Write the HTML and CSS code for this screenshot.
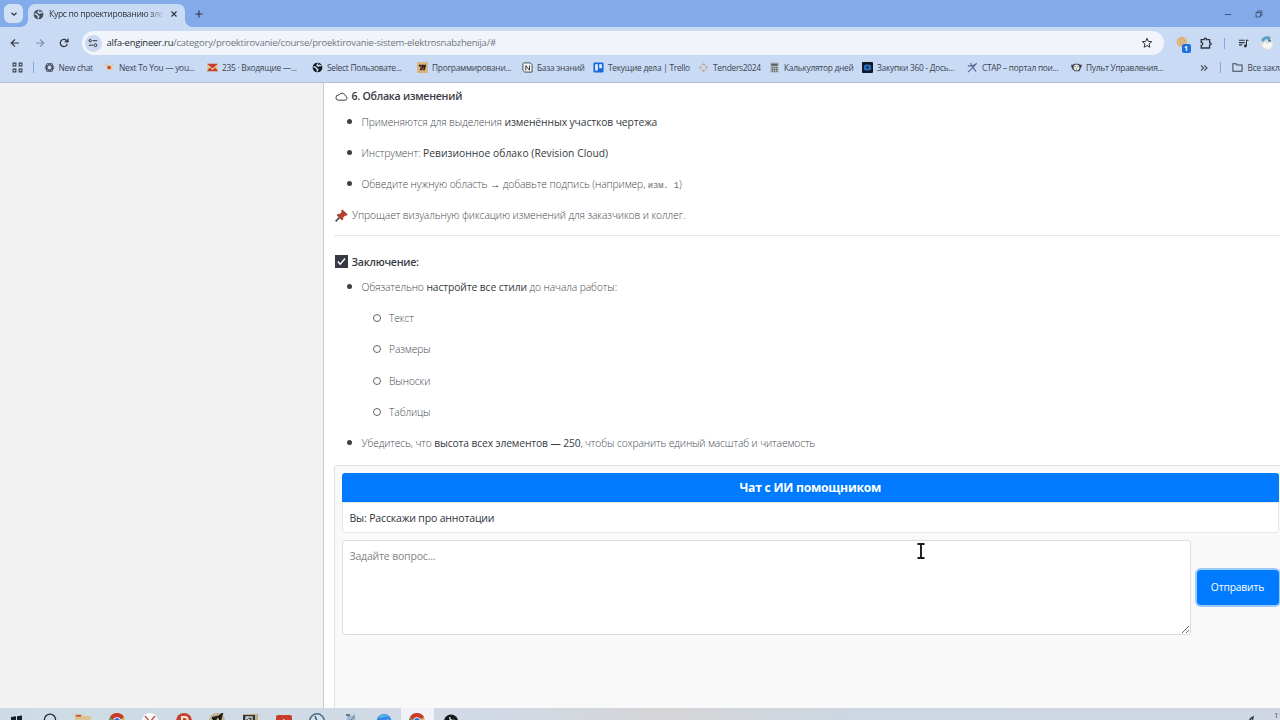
FILE: index.html
```html
<!DOCTYPE html>
<html lang="ru">
<head>
<meta charset="utf-8">
<title>Курс по проектированию электроснабжения</title>
<link rel="stylesheet" href="styles.css">
</head>
<body>
<svg class="defs" width="0" height="0" aria-hidden="true">
  <symbol id="globe" viewBox="0 0 12 12"><circle cx="6" cy="6" r="5.3" fill="currentColor"/><path d="M1.6 5.2 4 5.8l1 1.4 1.2.8-.6 2.4M6.4 1.7l-.7 1.9 1.4.8 1-.8 2.2.6" fill="none" stroke="#c9daf5" stroke-width="1.6"/></symbol>
  <symbol id="chrome" viewBox="0 0 16 16"><circle cx="8" cy="8" r="8" fill="#d7b46c"/><path d="M1 4.2A8 8 0 0 1 15 4.2L12 6H8L4.5 8Z" fill="#c93a2b"/><path d="M1 4.2 5 11l3 5A8 8 0 0 1 1 4.2" fill="#3a985a"/><circle cx="8" cy="8" r="3.8" fill="#fff"/><circle cx="8" cy="8" r="3" fill="#2675db"/></symbol>
</svg>
<div class="screen">
  <header class="tabs">
    <div class="tab-search"><svg viewBox="0 0 10 10"><path d="m2.5 3.8 2.5 2.4 2.5-2.4" fill="none" stroke="currentColor" stroke-width="1.2"/></svg></div>
    <div class="tab">
      <svg class="fav"><use href="#globe"/></svg>
      <span class="tab-title">Курс по проектированию элек</span>
      <svg class="close" viewBox="0 0 8 8"><path d="m1.5 1.5 5 5m0-5-5 5" stroke="currentColor" stroke-width="1.1"/></svg>
    </div>
    <svg class="plus" viewBox="0 0 8 8"><path d="M4 .4v7.2M.4 4h7.2" stroke="currentColor" stroke-width="1.1"/></svg>
    <div class="window-buttons">
      <svg viewBox="0 0 8 8"><path d="M.8 4.5h6.5" stroke="currentColor" stroke-width=".9"/></svg>
      <svg viewBox="0 0 8 8"><path d="M1 2.5h4.5V7H1ZM2.6 2.5V1h4.3v4.4H5.5" fill="none" stroke="currentColor" stroke-width=".9"/></svg>
    </div>
  </header>
  <div class="toolbar">
    <svg class="nav" viewBox="0 0 12 12"><path d="M10 6H2.4M6 2.3 2.3 6 6 9.7" fill="none" stroke="currentColor" stroke-width="1.2"/></svg>
    <svg class="nav off" viewBox="0 0 12 12"><path d="M2 6h7.6M6 2.3 9.7 6 6 9.7" fill="none" stroke="currentColor" stroke-width="1.2"/></svg>
    <svg class="nav" viewBox="0 0 12 12"><path d="M9.3 7a3.6 3.6 0 1 1-.8-3.5L10 4.8M10 1.6v3.3H6.8" fill="none" stroke="currentColor" stroke-width="1.2"/></svg>
    <div class="address">
      <span class="site"><svg viewBox="0 0 10 10"><path d="M4.6 2.7H9.2M.8 7.2h4.4" stroke="currentColor"/><circle cx="2.2" cy="2.7" r="1.2" fill="none" stroke="currentColor"/><circle cx="7.5" cy="7.2" r="1.4" fill="none" stroke="currentColor"/></svg></span>
      <span class="url"><b>alfa-engineer.ru</b>/category/proektirovanie/course/proektirovanie-sistem-elektrosnabzhenija/#</span>
      <svg class="star" viewBox="0 0 12 12"><path d="m6 1.3 1.3 3.1 3.4.3-2.6 2.2.8 3.4L6 8.5l-2.9 1.8.8-3.4-2.6-2.2 3.4-.3Z" fill="none" stroke="currentColor"/></svg>
    </div>
    <div class="extensions">
      <span class="cookie"><svg viewBox="0 0 14 14"><circle cx="5.8" cy="5.8" r="5.4" fill="#dcba83"/><path d="M3 4h1M6 3h1M4 7h1M8 5h1" stroke="#b6905e"/></svg><i>1</i></span>
      <svg class="puzzle" viewBox="0 0 12 12"><path d="M1.2 2.6h3V1.9a1.2 1.2 0 0 1 2.2 0v.7h3.2v3h.4a1.1 1.1 0 0 1 0 2.2h-.4v3.2H1.2V8.3a1.5 1.5 0 0 0 0-3Z" fill="none" stroke="currentColor" stroke-width="1.3"/></svg>
      <s></s>
      <svg class="music" viewBox="0 0 12 12"><path d="M1 2.5h6.3M1 5h6.3M1 7.5h3.6M11.5 2.5H9.2v6" fill="none" stroke="currentColor" stroke-width="1.2"/><circle cx="8" cy="8.7" r="1.6" fill="currentColor"/></svg>
      <svg class="avatar" viewBox="0 0 14 14"><circle cx="7" cy="7" r="7" fill="#d9dddf"/><path d="M1 4a7 7 0 0 1 10-2.5L9 4 6 3 3 6Z" fill="#5a9bc9"/><path d="m2 9 3-3 3 2 3-2 2 3-4 4-5-1Z" fill="#f7f7f4"/><path d="m8 3 3 1v2L8 5Z" fill="#397fba"/></svg>
    </div>
  </div>
  <nav class="bookmarks">
    <svg class="apps" viewBox="0 0 12 12"><path d="M1.2 1.2h3v3h-3ZM7.8 1.2h3v3h-3ZM1.2 7.8h3v3h-3ZM7.8 7.8h3v3h-3Z" fill="none" stroke="currentColor" stroke-width="1.2"/></svg>
    <s></s>
    <div class="links">
      <a><svg viewBox="0 0 12 12"><g fill="none" stroke="#404957" stroke-width="1"><ellipse cx="6" cy="6" rx="4.8" ry="2.6"/><ellipse cx="6" cy="6" rx="4.8" ry="2.6" transform="rotate(60 6 6)"/><ellipse cx="6" cy="6" rx="4.8" ry="2.6" transform="rotate(120 6 6)"/></g></svg><span>New chat</span></a>
      <a><svg viewBox="0 0 12 12"><path d="M2 3h7v6H3Z" fill="#e5c99c"/><circle cx="5.6" cy="6" r="2" fill="#c94830"/><path d="M1 3h1M5 1h1M9 3h1M9 8h1" stroke="#d9ad71"/></svg><span>Next To You — you...</span></a>
      <a><svg viewBox="0 0 12 12"><path d="M0 2h12v8H0Z" fill="#e0c7a0"/><path d="M0 2h12L6 7ZM0 10l3-4 3 3 3-3 3 4Z" fill="#c83c2d"/></svg><span>235 · Входящие —...</span></a>
      <a class="dark"><svg><use href="#globe"/></svg><span>Select Пользовате...</span></a>
      <a><svg viewBox="0 0 12 12"><rect width="12" height="12" rx="1" fill="#d8b47e"/><path d="M2 3h8L8.5 9H6.6l.8-4-2 4H3.2l.8-4H2Z" fill="#292222"/><path d="m4 3 2 6" stroke="#b83629"/></svg><span>Программировани...</span></a>
      <a><svg viewBox="0 0 12 12"><path d="M2 1h7l2 2v8H3L1 9V2Z" fill="#f5f5f3" stroke="#404449"/><path d="M4.2 9.2V4l4 5V3.8" fill="none" stroke="#292d31"/></svg><span>База знаний</span></a>
      <a><svg viewBox="0 0 12 12"><rect x=".5" y=".5" width="11" height="11" rx="1.5" fill="#1868db"/><path d="M2.4 2.5h2.8v6.8H2.4ZM6.8 2.5h2.8v4.2H6.8Z" fill="#eef5ff"/></svg><span>Текущие дела | Trello</span></a>
      <a><svg viewBox="0 0 12 12"><path d="m4.4 3.5 1.6-1.4 1.6 1.4M4.4 8.5 6 10l1.6-1.5M3.5 4.4 2 6l1.5 1.6M8.5 4.4 10 6 8.5 7.6" fill="none" stroke="#c49a82" stroke-width="1.2"/></svg><span>Tenders2024</span></a>
      <a><svg viewBox="0 0 12 12"><path d="M1.5.5h9v11h-9Z" fill="#b2b4b8"/><path d="M2.5 1.8h7v2.3h-7Z" fill="#565d68"/><path d="M3 6h6M3 8h6M3 10h6" stroke="#59616c" stroke-width="1.2" stroke-dasharray="1.4 .9"/></svg><span>Калькулятор дней</span></a>
      <a><svg viewBox="0 0 12 12"><rect width="12" height="12" rx="1" fill="#121923"/><path d="m2 3.5 2-.8h4l2 .8v5l-2 .8H4l-2-.8Z" fill="#2469b8"/><circle cx="6" cy="6" r="2" fill="#132439" stroke="#318ad7"/></svg><span>Закупки 360 - Дось...</span></a>
      <a><svg viewBox="0 0 12 12"><path d="m4 1 1.5 3.5L10 10.5M1 4.2h5L10.5 1.5 6 6.5 1 11" fill="none" stroke="#546b93" stroke-width="1.2"/></svg><span>СТАР – портал пои...</span></a>
      <a><svg viewBox="0 0 12 12"><path d="M0 3h2l2-1h4l2 1h2l-1 3-2 4H4L1 7Z" fill="#383d43"/><circle cx="6" cy="6" r="3.2" fill="#e7e9e9"/><path d="M4 5h1M7 5h1M6 7v1" stroke="#55595c"/></svg><span>Пульт Управления...</span></a>
    </div>
    <svg class="more" viewBox="0 0 8 8"><path d="m1 1.3 2.6 2.7L1 6.7M4.3 1.3 7 4 4.3 6.7" fill="none" stroke="currentColor" stroke-width="1.1"/></svg>
    <s></s>
    <a class="all"><svg viewBox="0 0 12 12"><path d="M1 2h3.6l1 1.4H11V10H1Z" fill="none" stroke="currentColor" stroke-width="1.1"/></svg><span>Все закладки</span></a>
  </nav>
  <main>
    <aside></aside>
    <article>
      <h3><svg class="cloud" viewBox="0 0 12 12"><path d="M3 9.4h6.4a1.9 1.9 0 0 0 .4-3.7A3.4 3.4 0 0 0 3.6 4.6 2.4 2.4 0 0 0 3 9.4Z" fill="none" stroke="currentColor" stroke-width=".9"/></svg><span>6. Облака изменений</span></h3>
      <ul>
        <li>Применяются для выделения <b>изменённых участков чертежа</b></li>
        <li>Инструмент: <b class="wide">Ревизионное облако (Revision Cloud)</b></li>
        <li>Обведите нужную область → добавьте подпись (например, <code>изм. 1</code>)</li>
      </ul>
      <p class="note"><svg viewBox="0 0 12 12"><path d="M.6 11.4 4 8" stroke="#4c4d50" stroke-width="1.5"/><path d="m6.7.8 4.7 4.3-1.2.9-.8-.2-2.2 2 .1 1.7-.8.8-4.7-4.6.9-.9 1.9.1 1.8-2.2-.3-1Z" fill="#c13b27" stroke="#5e3633" stroke-width=".5"/></svg><span>Упрощает визуальную фиксацию изменений для заказчиков и коллег.</span></p>
      <hr>
      <h3 class="final"><svg viewBox="0 0 12 12"><rect width="12" height="12" fill="#373942"/><path d="m2.5 6 2.3 2.4 4.5-5.2" fill="none" stroke="#fff" stroke-width="1.3"/></svg><span>Заключение:</span></h3>
      <ul>
        <li>Обязательно <b>настройте все стили</b> до начала работы:
          <ul><li>Текст</li><li>Размеры</li><li>Выноски</li><li>Таблицы</li></ul>
        </li>
        <li class="last">Убедитесь, что <b>высота всех элементов — 250</b>, чтобы сохранить единый масштаб и читаемость</li>
      </ul>
      <section class="chat">
        <h2>Чат с ИИ помощником</h2>
        <div class="message">Вы: Расскажи про аннотации</div>
        <div class="ask"><textarea placeholder="Задайте вопрос..."></textarea><button>Отправить</button></div>
      </section>
    </article>
  </main>
  <footer>
    <div class="tasks">
      <span><svg viewBox="0 0 16 16"><path d="m2 4 5-.7V8H2ZM8 3.2 13 2.5V8H8ZM2 9h11v6H2Z" fill="#17202a"/></svg></span>
      <span><svg viewBox="0 0 16 16"><circle cx="8" cy="6.7" r="5.6" fill="none" stroke="#1c2730" stroke-width="1.3"/></svg></span>
      <span><svg viewBox="0 0 16 16"><path d="M0 1h6l2 2h8v12H0Z" fill="#dec28f"/><path d="M1 2h5v1.6H1Z" fill="#c44b36"/></svg></span>
      <span><svg><use href="#chrome"/></svg></span>
      <span><svg viewBox="0 0 16 16"><circle cx="8" cy="8" r="8" fill="#fafafa"/><path d="m3 3 5 6 5-6" fill="none" stroke="#bd5542" stroke-width="1.4"/></svg></span>
      <span><svg viewBox="0 0 16 16"><circle cx="8" cy="8" r="8" fill="#c74130"/><path d="M6 9V4h3a2 2 0 0 1 0 5" fill="none" stroke="#f4e4cd" stroke-width="2"/></svg></span>
      <span><svg viewBox="0 0 16 16"><circle cx="8" cy="8" r="8" fill="#c7b28a"/><path d="m3 5 5-1-3 5m4-5 4-3-2 7" stroke="#22231f" stroke-width="2"/></svg></span>
      <span><svg viewBox="0 0 16 16"><path d="M1 1h15v14H1Z" fill="#c6ad83"/><path d="M1 2h12v12H1Z" fill="#30343b"/><path d="M4 8V4h6v4M5 5l4 3" fill="none" stroke="#d2d3d1" stroke-width="1.3"/></svg></span>
      <span><svg viewBox="0 0 16 16"><rect y="2" width="16" height="13" rx="2" fill="#c83d2d"/><path d="m7 6 4 2-4 2Z" fill="#fff"/></svg></span>
      <span><svg viewBox="0 0 16 16"><circle cx="8" cy="8" r="7.2" fill="#d5e1e8" stroke="#4b6882" stroke-width="1.5"/><path d="m6 3 2 5 4 2" fill="none" stroke="#405c77" stroke-width="1.5"/></svg></span>
      <span><svg viewBox="0 0 16 16"><path d="M4 1 8 3l4-2v7l-4 3-4-3Z" fill="#a0b8cf"/><path d="M3 1h4v2H3Z" fill="#687784"/><path d="m8 7 4-4" stroke="#687784"/></svg></span>
      <span><svg viewBox="0 0 16 16"><circle cx="8" cy="8.5" r="7.5" fill="#3388ea"/><path d="M2 4Q8-1 13 4Q8 3 5 5Z" fill="#55b7de"/><path d="m6 9 7-3-3 5Z" fill="#d3ecff"/></svg></span>
      <span class="active"><svg><use href="#chrome"/></svg></span>
      <span><svg viewBox="0 0 16 16"><circle cx="8" cy="8.5" r="7" fill="#17191d"/><path d="M7 4q-1 4 5 3.5" fill="none" stroke="#dce5e9" stroke-width="1.4"/></svg></span>
    </div>
    <svg class="tray" viewBox="0 0 8 8"><path d="M2 8Q2 4 6 2L5 7" fill="none" stroke="#38424e" stroke-width="1.5"/></svg>
    <span class="clock">11</span>
  </footer>
  <svg class="cursor" viewBox="0 0 8 16"><path d="M.5 1h2.8q.7 0 .7.7 0-.7.7-.7h2.8M4 1v14M.5 15h2.8q.7 0 .7-.7 0 .7.7.7h2.8" fill="none" stroke="#171923" stroke-width="1.9"/></svg>
</div>
</body>
</html>
```
FILE: styles.css
```css
* { box-sizing: border-box; }
body { margin: 0; overflow: hidden; font-family: "Open Sans", "Noto Sans", sans-serif; color: #30343a; }
.defs { display: block; height: 0; }
.screen { position: relative; width: 1280px; height: 720px; display: flex; flex-direction: column; overflow: hidden; }
svg { display: block; flex: none; }
.tabs { height: 27px; background: #83aae9; display: flex; align-items: center; padding-left: 4px; flex: none; }
.tab-search { width: 19px; height: 19px; border-radius: 6px; background: #d2e0f6; display: grid; place-items: center; }
.tab-search svg { width: 10px; height: 10px; }
.tab { position: relative; align-self: flex-end; height: 23px; width: 157px; margin-left: 5px; border-radius: 7px 7px 0 0; background: #c9daf5; display: flex; align-items: center; padding: 0 7px 3px 5px; }
.tab::before, .tab::after { content: ""; position: absolute; bottom: 0; width: 7px; height: 7px; }
.tab::before { left: -7px; background: radial-gradient(circle at 0 0, transparent 6.5px, #c9daf5 7px); }
.tab::after { right: -7px; background: radial-gradient(circle at 100% 0, transparent 6.5px, #c9daf5 7px); }
.fav { width: 11px; height: 11px; color: #444c59; }
.tab-title { margin-left: 5px; width: 116px; overflow: hidden; white-space: nowrap; font-size: 8.6px; letter-spacing: -.33px; -webkit-mask-image: linear-gradient(90deg, #000 86%, transparent 99%); }
.close { width: 8px; height: 8px; margin-left: auto; }
.plus { width: 8px; height: 8px; margin-left: 9.5px; }
.window-buttons { margin-left: auto; display: flex; gap: 23px; padding-right: 17px; color: #3e5272; }
.window-buttons svg { width: 8px; height: 8px; }
.toolbar { height: 29px; flex: none; background: #c9daf5; display: flex; align-items: center; padding: 3px 0 0 9px; }
.nav { width: 12px; height: 12px; margin-right: 12.5px; }
.off { color: #7f8ea8; }
.address { width: 1082px; height: 24px; margin-left: -1px; background: #f1f5fb; border-radius: 12px; display: flex; align-items: center; padding: 0 11px 0 3px; }
.site { width: 17px; height: 17px; border-radius: 50%; background: #cbdaf2; display: grid; place-items: center; }
.site svg { width: 10px; height: 10px; }
.url { margin-left: 5px; padding-bottom: 1px; font-size: 9.5px; color: #70767f; letter-spacing: -.235px; white-space: nowrap; }
.url b { font-weight: 400; color: #272c33; }
.star { width: 12px; height: 12px; margin-left: auto; }
.extensions { display: flex; align-items: center; margin-left: 12px; }
.cookie { position: relative; width: 15px; height: 14px; }
.cookie svg { width: 14px; height: 14px; }
.cookie i { position: absolute; right: 0; bottom: -3px; width: 9px; height: 9px; border-radius: 2px; background: #1a70df; color: #fff; font: bold 7px/9px "Open Sans", sans-serif; text-align: center; }
.puzzle { width: 12px; height: 12px; margin-left: 9px; }
.toolbar s, .bookmarks s { width: 1px; height: 11px; background: #80a8e5; flex: none; }
.toolbar s { margin: 0 13px 0 12px; }
.music { width: 11px; height: 11px; }
.avatar { width: 14px; height: 14px; margin-left: 11px; }
.bookmarks { height: 27px; flex: none; background: #c9daf5; border-bottom: 1px solid #b4bfcd; display: flex; align-items: center; padding: 0 0 3px 12px; font-size: 8.4px; color: #3d4550; white-space: nowrap; overflow: hidden; }
.apps { width: 11px; height: 11px; margin-right: 10px; }
.links { margin-left: 9.5px; display: grid; grid-template-columns: 60.5px 103px 105px 105px 105px 71px 105px 71px 93px 105px 104px 132px; }
.bookmarks a { display: flex; align-items: center; gap: 4px; letter-spacing: -.27px; }
.bookmarks a svg { width: 11px; height: 11px; }
.dark { color: #15191e; }
.dark span { color: #3d4550; }
.more { width: 8px; height: 8px; margin: 0 12px 0 -3px; }
.bookmarks .all { margin-left: 10.5px; flex: none; gap: 5px; }
main { height: 625px; flex: none; display: flex; background: #fff; }
aside { width: 324px; flex: none; background: #f2f2f2; border-right: 1px solid #ccc; }
article { width: 956px; padding: 3.5px 0 0 10px; overflow: hidden; display: flex; flex-direction: column; }
h2, h3, p, ul { margin: 0; }
h3 { display: flex; align-items: center; gap: 3.5px; height: 19px; flex: none; padding-left: 1px; font-size: 10.6px; font-weight: 600; letter-spacing: -.25px; color: #383b44; }
h3 svg, .note svg { width: 13px; height: 13px; }
article ul { padding-left: 27.5px; list-style: none; font-size: 10.3px; letter-spacing: -.1px; font-weight: 300; color: #464a50; line-height: 20px; }
article h3 + ul > li:first-child { margin-top: 6px; }
article .final + ul > li:first-child { margin-top: 5.5px; }
li { position: relative; margin-bottom: 11.3px; }
li::before { content: ""; position: absolute; left: -15px; top: 7px; width: 5px; height: 5px; border-radius: 50%; background: #3c3f46; }
ul ul li::before { left: -15.6px; width: 6px; height: 6px; top: 6px; background: none; border: 1px solid #62656a; }
li b { font-weight: 400; color: #363a41; }
.wide { letter-spacing: .02px; }
ul ul { margin-top: 11.3px; }
ul ul li:last-child { margin-bottom: 0; }
.last { letter-spacing: -.13px; }
code { font-family: "Liberation Mono", monospace; font-size: 8.8px; letter-spacing: -.1px; line-height: 1; color: #766669; }
.note { display: flex; align-items: center; gap: 4px; height: 20px; flex: none; padding-left: 1px; font-size: 10.3px; letter-spacing: -.09px; font-weight: 300; color: #464a50; }
hr { width: 100%; margin: 9.5px 0 16.3px; border: 0; border-top: 1px solid #e8e8e8; flex: none; }
.chat { flex: none; height: 260px; width: 960px; margin-top: .5px; padding: 7px 14px 0 6.5px; border: 1px solid #e0e0e0; border-radius: 3px; background: #f9f9f9; }
.chat h2 { height: 29px; background: #007bff; border-radius: 3px 3px 0 0; color: #fff; font-size: 12.2px; font-weight: 700; line-height: 29px; text-align: center; letter-spacing: -.25px; }
.message { height: 31px; padding-left: 7px; background: #fff; border: 1px solid #e7e7e7; border-radius: 0 0 3px 3px; font-size: 10.5px; letter-spacing: -.16px; line-height: 30px; }
.ask { margin-top: 7px; display: flex; align-items: center; gap: 6px; }
textarea { width: 849px; height: 95px; border: 1px solid #ddd; border-radius: 3px; padding: 6px 7px; font: 10.5px/18px "Open Sans", sans-serif; letter-spacing: -.18px; resize: vertical; outline: 0; }
textarea::placeholder { color: #858585; }
button { width: 82px; height: 35px; border: 0; border-radius: 4px; background: #007bff; color: #fff; font: 10.3px "Open Sans", sans-serif; letter-spacing: -.15px; box-shadow: 0 0 0 2px #9bcaff; padding: 0; flex: none; }
footer { height: 12px; flex: none; background: linear-gradient(90deg, #cddce4, #d1d9e5 38%, #d5d5d7 52%, #ccd7e2 68%, #d0d7e4); display: flex; overflow: hidden; }
.tasks { display: flex; }
.tasks span { width: 33.4px; height: 12px; display: flex; justify-content: center; padding-top: 5px; }
.tasks svg { width: 16px; height: 16px; }
.tasks .active { background: #f0f2f8; }
.tray { width: 8px; height: 8px; margin: 7px 0 0 auto; }
.clock { width: 6px; margin-left: 19px; font-size: 8px; line-height: 14px; color: #4a525e; overflow: hidden; }
.cursor { position: absolute; left: 917px; top: 543px; width: 8px; height: 16px; }
```
